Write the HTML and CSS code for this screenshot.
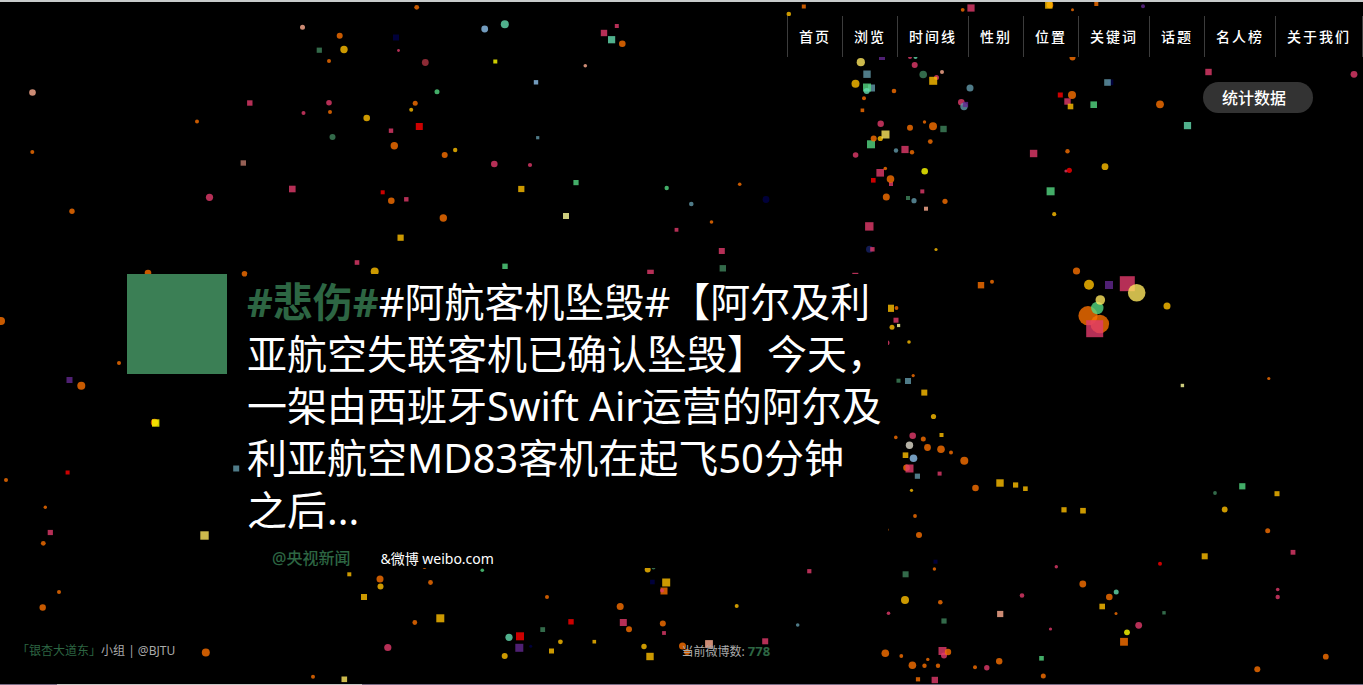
FILE: index.html
```
<!DOCTYPE html>
<html lang="zh-CN">
<head>
<meta charset="utf-8">
<meta name="viewport" content="width=device-width, initial-scale=1">
<title>微博情绪</title>
<link rel="stylesheet" href="styles.css">
</head>
<body class="page">
<svg class="particles" id="particles" aria-hidden="true"></svg>
<header class="header">
  <nav class="nav">
    <a class="nav-link" href="#">首页</a>
    <a class="nav-link" href="#">浏览</a>
    <a class="nav-link" href="#">时间线</a>
    <a class="nav-link" href="#">性别</a>
    <a class="nav-link" href="#">位置</a>
    <a class="nav-link" href="#">关键词</a>
    <a class="nav-link" href="#">话题</a>
    <a class="nav-link" href="#">名人榜</a>
    <a class="nav-link" href="#">关于我们</a>
  </nav>
  <button class="stats" type="button">统计数据</button>
</header>
<main class="post">
  <div class="swatch"></div>
  <article class="card">
    <p class="text"><strong class="mood">#悲伤#</strong>#阿航客机坠毁#【阿尔及利<br>亚航空失联客机已确认坠毁】今天，<br>一架由西班牙Swift Air运营的阿尔及<br>利亚航空MD83客机在起飞50分钟<br>之后...</p>
    <p class="meta"><a class="author" href="#">@央视新闻</a><a class="source" href="#">&amp;微博 weibo.com</a></p>
  </article>
</main>
<footer class="footer">
  <p class="credit"><a class="team" href="#">「银杏大道东」</a>小组 | @BJTU</p>
  <p class="counter">当前微博数: <strong class="count">778</strong></p>
</footer>
<script src="particles.js"></script>
</body>
</html>
```
FILE: styles.css
```
* {
  box-sizing: border-box;
}

.page {
  position: relative;
  display: flex;
  flex-direction: column;
  min-height: 100vh;
  margin: 0;
  overflow-x: hidden;
  border-top: 2px solid #c8cbcb;
  background: #000;
  color: #fff;
  font-family: "Noto Sans", "Noto Sans CJK SC", sans-serif;
}

.page::after {
  content: "";
  display: block;
  height: 1px;
  background: linear-gradient(90deg, #7a6c84 0 57px, #c9c5c5 57px 362px, #7a6c84 362px);
}

.page a {
  text-decoration: none;
}

.particles {
  position: absolute;
  inset: -2px 0 1px;
  z-index: -1;
  width: 100%;
  height: calc(100% + 1px);
}

.header {
  display: flex;
  flex-direction: column;
  align-items: flex-end;
  gap: 25px;
  padding-top: 14px;
}

.nav {
  display: flex;
  border-right: 1px solid #3c3c3c;
  background: #000;
}

.nav-link {
  padding: 0 11px;
  border-left: 1px solid #3c3c3c;
  color: #fff;
  font-size: 14px;
  font-weight: 500;
  letter-spacing: 2px;
  line-height: 41px;
}

.stats {
  margin-right: 50px;
  padding: 2px 27px 0 19px;
  border: 0;
  border-radius: 16px;
  background: #333;
  color: #fff;
  font: 500 16px/29px "Noto Sans", "Noto Sans CJK SC", sans-serif;
}

.post {
  display: flex;
  align-items: flex-start;
  gap: 20px;
  margin-top: 161px;
  padding-left: 127px;
}

.swatch {
  flex: none;
  width: 100px;
  height: 100px;
  background: #3b7f55;
}

.card {
  width: 641px;
  background: #000;
}

.text {
  margin: 0;
  padding-top: 2px;
  font-size: 40px;
  line-height: 52px;
  white-space: nowrap;
}

.mood {
  color: #2d6643;
}

.meta {
  display: flex;
  align-items: center;
  gap: 30px;
  margin: 0;
  padding: 13px 0 0 25px;
  line-height: 19px;
}

.author {
  color: #2d6643;
  font-size: 16px;
  font-weight: 500;
}

.source {
  color: #fff;
  font-size: 14px;
}

.footer {
  display: grid;
  grid-template-columns: 1fr 1fr;
  margin-top: auto;
  padding-bottom: 22px;
  color: #aaa;
  font-size: 12px;
  line-height: 20px;
}

.credit,
.counter {
  margin: 0;
}

.credit {
  padding-left: 17px;
}

.team,
.count {
  color: #2d6643;
}

.count {
  font-size: 13px;
}
```
FILE: particles.js
```
const COLORS = {
  orange: '#fa7000', pink: '#e23b6c', gold: '#ffbf00', moss: '#40845d',
  green: '#54d882', teal: '#64dcaf', salmon: '#ffae91', sky: '#8fc2ec',
  slate: '#639aaa', navy: '#000048', indigo: '#162064', violet: '#632890',
  red: '#ff0000', yellow: '#ffff00', khaki: '#ffe75f', sand: '#ffff9c',
  wine: '#af3542', brown: '#bc786a', stone: '#e1dccd'
};

/* Each row: colour, shape, then "x,y,radius" entries (radius is half the side of a square). */
const FIELD = [
  'salmon circle 302.5,27.3,2.5 32.5,92.5,3.3 585.3,65.7,1.8 942,72,2',
  'orange circle 339.7,35.7,3 329,61,2 197,121.5,2 330,112,2 394.3,145.7,3.7 32.3,152,2 72,211.3,2.7 391.3,200.7,3.3 416.7,7.3,2.4 622.3,43.7,3.3 415.2,103.2,2.5 444.7,155,3 443.3,218,3.7 739.7,184.3,1.8 711.5,222,1.8 962.7,9.8,1.9 1050,5,3.3 1072.5,9.8,1.5 1072.5,57.5,3 894,91,2.3 864,98.3,2 910,127.7,3 924.5,122,1.7 933,126.3,4 1160,104.3,3.9 1067.5,151.3,2.2',
  'gold circle 344,49.5,3.7 366.7,118,3.3 411.2,109.7,2 455.2,150,2.2 788.8,14,2.3 855.5,83.8,4 1105,166.7,3.4 880.3,138.5,2.6 1054.2,214.2,2.1 936,249.5,1.6 892,327.3,2.5 909,342,1.8 374.7,271.5,4',
  'pink circle 329,102.7,2.8 303.5,113,2 209.5,197.3,3.6 494.3,164,3.3 530,165,2.1 910,57,2 914.7,65,3 936.5,77.5,2.5 961.3,102.3,3.3 880.7,123.7,3.2 1354,74.3,3.4 1066,171,1.6 855.6,155,2.8 887,342.7,2.5 398.5,50.5,1.4',
  'moss circle 332.5,137,3 923.2,74.5,3.8',
  'moss square 319.3,50.2,2.6 943.5,129,3.2 908,198,2 722.8,268.3,3.2',
  'pink square 249.8,103,2.7 391,130.7,2.2 292.3,189,3.3 604,33,3.2 616.8,26,2 406.3,199.3,2.2 676.5,229.8,1.9 971,8,3.6 1208.5,72,3.2 905,149.5,3.6 1033.6,153.5,3.7 880.2,172.8,3.8 891,184,2 922.3,191.4,2 869.3,226.4,4.2 855.3,275.8,3 896,320.2,2.5 357,262.5,2.3 650.5,273,3.3 721.8,251,3',
  'brown square 243.3,163,2.7',
  'navy square 396,37.5,3 1110.5,82.3,2.8',
  'navy circle 766,199.5,3.4',
  'sky circle 484.7,29,3.4',
  'wine circle 425.3,62.5,3.4',
  'green circle 437,91.7,2.5 666.7,188,2.2',
  'slate circle 691.3,204,2.3 970,88,3.5 964,106.5,3.7 896,150.5,2.2 914,200.7,2.6',
  'red square 382.7,192.3,2 419.3,126.5,3.5 1060.3,95,2.5 873.3,180.3,2.3',
  'teal square 611.6,39.7,3.6 1187.5,125.6,3.6',
  'yellow square 495.3,61.5,2',
  'sky square 536,82.3,2.2',
  'slate square 537.7,137.7,1.6 867,74.2,3.7 871.5,88,3.5 1107.5,82.5,3.3',
  'gold square 521.3,189,3.1 400.6,237.7,3.1 1048.8,5,3.7 933.2,80.8,4 890.4,308.3,3.6',
  'green square 576,182.6,2.6 867,87.5,4 1093.7,104.7,3.3 871,144.3,4 1050.6,191.3,4 505,266.3,2.7',
  'khaki square 885.5,134.5,4',
  'sand square 566,216,3 898.6,325.5,1.6 1182.4,385.5,1.7',
  'orange square 803.8,6.5,2 862.4,110.3,1.8 1096.3,4,2 981,285.2,3.2',
  'violet square 882,57,3 965.5,104.5,2.6 69.5,380,3',
  'violet circle 1143,6.3,2',
  'khaki circle 860.8,62.2,4.1',
  'teal circle 504.8,24.3,4 915.5,57,2 866.7,91,3',
  'orange circle 1072,95,4 873.7,138.5,3 912,152.2,2.2 930.3,141.6,2.4 885.3,168.5,1.8 890.5,179,3.8 886.3,197,3.5 945,201.3,2.6 992,281.7,2 1076.5,271,3.6 896.5,308,1.9 148,273,3.3 244.5,273.7,2.8 1,321,4 119,363,2 81.3,385.7,4 154.5,422.5,3.7',
  'pink square 1067.5,101.5,3.2',
  'gold square 1070.5,106.5,2.8',
  'red circle 1069.3,170.3,2.6',
  'yellow circle 924.7,171.2,3.3',
  'salmon square 926,208.7,2',
  'indigo circle 869.5,249.3,3.5',
  'pink square 872.4,249.3,2.2',
  'yellow square 155.7,423,3.7',

  'gold circle 1089,284.7,5 1167,306,3.5',
  'violet square 1109,285,4',
  'pink square 1127.3,283.7,7.5',
  'khaki circle 1136.7,292.7,8.8',
  'orange circle 1088,315.7,9.6 1099.8,324,9.3 1268.8,378.5,1.6',
  'pink square 1094.7,328.7,8.5',
  'green circle 1097.3,308,6.2',
  'khaki circle 1100.3,300,4.8',

  'red square 67.6,472.5,2 520,636.3,4 571,621.8,2.7',
  'slate square 236.2,468.5,3 908,381,3 917.4,476.2,2.6',
  'orange circle 6,480,2 45.3,507.3,1.7 43.3,543.3,2.4 59,592,2 42.7,607.5,3.2 205.8,652.5,4 313,676.7,2 380,579,3.5 424.5,567,2 430.5,582.5,2.4 414.8,622.5,2.4 547,597,2 620.2,606.5,3.5 629,629.3,3 662.8,623.5,3 682.5,646,3.5 687,652,3',
  'pink square 50.3,532.5,2.6 623.3,622.5,3.5 664,633,1.9 765.2,641.3,3 809.3,571.2,2.1 939.6,473.6,2 934.8,680,3.2 1293,552.3,2.4',
  'khaki square 204.5,535.5,4.2 344.3,679.3,2.8',
  'gold square 349.3,574.3,2 364,597,3 440.3,618.3,4 551.5,651,2.5 594.3,641.7,1.8 650,656.5,3.7 666.2,582.5,4 924.3,392.6,3 941.5,435,2 905.5,455.2,2.8 1000,483,3.7 1015.6,485,2.6 1025.4,488.7,2.3 1064,509.8,2.6 1083,510.7,2.8 1277,493.7,2.5 1204.7,556.3,3 1102.2,606.5,2.8',
  'gold circle 380.5,586.5,3 504.7,656,3 560.4,641.8,2.4 644,646.5,2.7 647.7,569.5,3 736.7,606,2 933.5,416.5,2.6 911.5,490.3,1.6 905,600,4 1224.7,509.5,2.9',
  'pink circle 387.8,647.5,3.6 912.7,435.8,3.3 888.5,613.3,1.8 986.8,667.8,2.7 1022,595.5,2.3 1056.3,566.7,1.7 1050.5,629,1.6 1138.7,625.3,3.4 1277.7,589.5,1.8 1277.7,597,2.2',
  'green circle 482.3,570.3,1.8',
  'teal circle 509,637.3,3.6 1116.2,592,2.5',
  'violet square 519.3,647.8,4',
  'navy circle 530.7,646.3,1.5',
  'navy square 652.4,582,2.3 935.5,561.7,2',
  'moss square 542.7,629.6,2.4 898.5,380.7,2 905.6,574.3,3 944,621,2.6 1164,612.8,1.7',
  'moss circle 653.5,567.5,2 1215,493,1.9',
  'orange square 664,591,3.5 918,679.3,2.1 1124,641.8,3.9',
  'pink circle 662,590.5,2',
  'salmon square 709,644,3.9 1000.2,614,3.1',
  'slate circle 797.7,625,1.8',
  'orange circle 913.2,375.6,1.6 895.8,437.4,1.8 923.3,439,2.5 927.5,447.5,3.4 941,449.3,3.8 951,452.5,2 964.3,460.7,4 906.5,467.8,3.3 975.5,488,3.3 915,516,1.9 919,535,3 886.8,529.8,1.8 934.4,569,1.7 940.3,602.3,2.3 885.3,653.2,3.8 901.3,656,1.9 912.4,665.3,3.8 924.5,665.7,2.2 927.8,659.4,1.7 938,665.8,2.2 975,667.2,2 999.2,661.2,3.2 1043.3,676,2.5 1082.8,584,3.4 1267.7,530.8,2.5 1109.3,597,3.3 1116,613.4,1.5 1325.8,656.7,2.9 1257.3,669.3,3',
  'stone circle 909.5,445.3,3.7',
  'sky circle 913.5,458.3,3.8',
  'pink square 909.5,468.5,4 942.5,651,4',
  'pink circle 944,655.5,3',
  'orange circle 948,652,3.2',
  'green square 1041.5,658.3,2.3 1242.3,486.3,3.1',
  'red circle 1160,563.8,2',
  'yellow circle 1127,632.3,2.9'
];

const SVG_NS = 'http://www.w3.org/2000/svg';
const svg = document.getElementById('particles');

function setAttributes(node, values) {
  for (const [name, value] of Object.entries(values)) {
    node.setAttribute(name, value);
  }
}

for (const row of FIELD) {
  const [color, shape, ...entries] = row.split(' ');
  for (const entry of entries) {
    const [x, y, r] = entry.split(',').map(Number);
    const node = document.createElementNS(SVG_NS, shape === 'circle' ? 'circle' : 'rect');
    setAttributes(node, { fill: COLORS[color], 'fill-opacity': 0.8 });
    if (shape === 'circle') {
      setAttributes(node, { cx: x, cy: y, r });
    } else {
      setAttributes(node, { x: x - r, y: y - r, width: 2 * r, height: 2 * r });
    }
    svg.appendChild(node);
  }
}
```
